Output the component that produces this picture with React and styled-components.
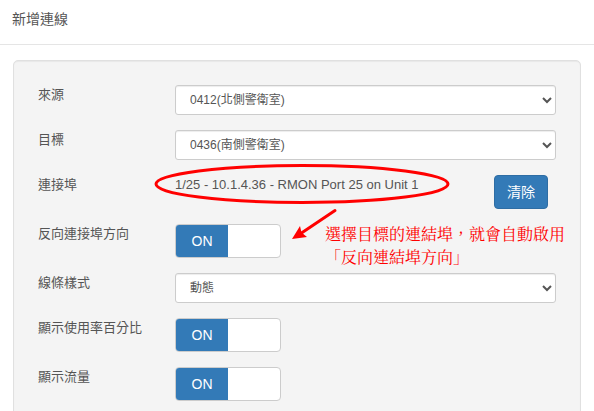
import React from "react";
import styled, { createGlobalStyle } from "styled-components";

const GlobalStyle = createGlobalStyle`
  *, *::before, *::after { box-sizing: border-box; }
  body {
    margin: 0;
    background: #fff;
    color: #555;
    font-family: "Liberation Sans", "Noto Sans CJK TC", sans-serif;
    font-size: 13px;
    line-height: 20px;
  }
`;

const Page = styled.main`
  height: 100vh;
  overflow: hidden;
`;

const Header = styled.header`
  padding: 9px 12px 15px;
  border-bottom: 1px solid #e5e5e5;
`;

const Title = styled.h1`
  margin: 0;
  font-size: 14px;
  font-weight: 400;
  line-height: 20px;
`;

const Well = styled.form`
  display: flex;
  flex-direction: column;
  gap: 15px;
  margin: 15px 13px;
  padding: 24px;
  background: #f4f4f4;
  border: 1px solid #e0e0e0;
  border-radius: 5px;
  box-shadow: inset 0 1px 1px rgba(0, 0, 0, 0.05);
`;

const Row = styled.div`
  display: grid;
  grid-template-columns: 137px 1fr;
  align-items: start;
`;

const Label = styled.label`
  line-height: 20px;
`;

const Select = styled.select`
  width: 100%;
  height: 30px;
  padding: 0 10px;
  color: #555;
  background: #fff;
  border: 1px solid #ccc;
  border-radius: 3px;
  box-shadow: inset 0 1px 1px rgba(0, 0, 0, 0.075);
  font: inherit;
  font-size: 12px;
`;

const PortCell = styled.div`
  position: relative;
  display: flex;
  justify-content: space-between;
  align-items: flex-start;
  padding-right: 8px;
`;

const PortValue = styled.output`
  white-space: nowrap;
`;

const ClearButton = styled.button`
  height: 34px;
  padding: 0 12px;
  color: #fff;
  background: #337ab7;
  border: 1px solid #2e6da4;
  border-radius: 4px;
  font: inherit;
  font-size: 14px;
  cursor: pointer;
`;

const SwitchTrack = styled.label`
  display: flex;
  width: 106px;
  height: 34px;
  overflow: hidden;
  background: #fff;
  border: 1px solid #ccc;
  border-radius: 4px;
  cursor: pointer;
`;

const SwitchInput = styled.input`
  appearance: none;
  width: 0;
  height: 0;
  margin: 0;

  &:not(:checked) + span {
    visibility: hidden;
  }
`;

const SwitchOn = styled.span`
  width: 50%;
  color: #fff;
  background: #337ab7;
  font-size: 14px;
  line-height: 32px;
  text-align: center;
`;

const Marks = styled.svg`
  position: absolute;
  top: -15px;
  left: -25px;
  width: 300px;
  height: 85px;
  pointer-events: none;
`;

const Note = styled.p`
  position: absolute;
  top: 48px;
  left: 150px;
  margin: 0;
  color: #f00;
  font-family: "Liberation Serif", "Noto Serif CJK TC", "Noto Sans CJK TC", serif;
  font-size: 16px;
  line-height: 23px;
  white-space: nowrap;
  pointer-events: none;
`;

function SelectRow({ id, label, option }) {
  return (
    <Row>
      <Label htmlFor={id}>{label}</Label>
      <Select id={id}>
        <option>{option}</option>
      </Select>
    </Row>
  );
}

function SwitchRow({ id, label }) {
  return (
    <Row>
      <Label htmlFor={id}>{label}</Label>
      <SwitchTrack>
        <SwitchInput id={id} type="checkbox" defaultChecked />
        <SwitchOn>ON</SwitchOn>
      </SwitchTrack>
    </Row>
  );
}

export default function App() {
  return (
    <>
      <GlobalStyle />
      <Page>
        <Header>
          <Title>新增連線</Title>
        </Header>
        <Well>
          <SelectRow id="source" label="來源" option="0412(北側警衛室)" />
          <SelectRow id="target" label="目標" option="0436(南側警衛室)" />
          <Row>
            <Label htmlFor="port">連接埠</Label>
            <PortCell>
              <PortValue id="port">1/25 - 10.1.4.36 - RMON Port 25 on Unit 1</PortValue>
              <ClearButton type="button">清除</ClearButton>
              <Marks viewBox="0 0 300 85" aria-hidden="true">
                <ellipse cx="152" cy="24" rx="146" ry="18.5" fill="none" stroke="#f00" strokeWidth="3" />
                <path d="M185 50.5 L150 74" fill="none" stroke="#f00" strokeWidth="3" strokeLinecap="round" />
                <path d="M142 79 L150 66 L151.500 72.500 L157 77 Z" fill="#f00" />
              </Marks>
              <Note>
                選擇目標的連結埠，就會自動啟用
                <br />
                「反向連結埠方向」
              </Note>
            </PortCell>
          </Row>
          <SwitchRow id="reverse" label="反向連接埠方向" />
          <SelectRow id="line-style" label="線條樣式" option="動態" />
          <SwitchRow id="show-usage" label="顯示使用率百分比" />
          <SwitchRow id="show-traffic" label="顯示流量" />
        </Well>
      </Page>
    </>
  );
}
